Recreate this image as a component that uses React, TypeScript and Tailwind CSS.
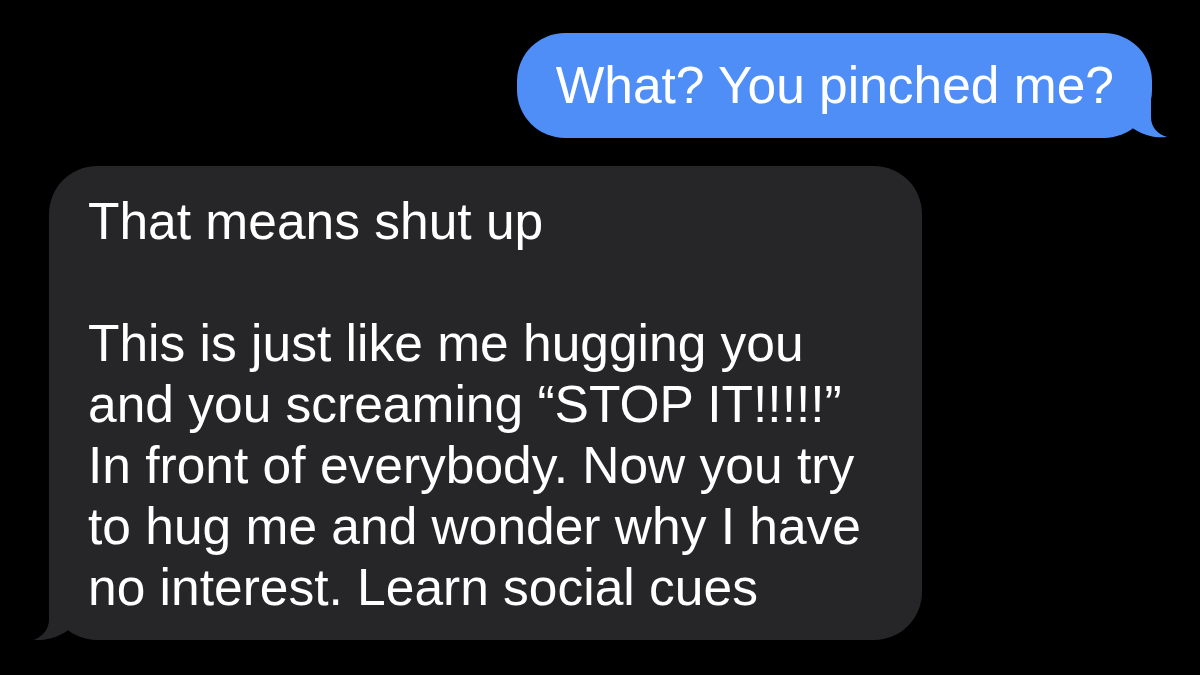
import React from 'react';

const font = { fontFamily: '"Liberation Sans", Arial, Helvetica, sans-serif' };

// small curved tail under the bubble, drawn on top of the rounded corner
function SentTail() {
    return (
        <svg className="absolute right-[-17px] bottom-0" width="42" height="50" viewBox="0 0 42 50">
            <path d="M24 0 L24 29 C24 40 31 46 40 49 C28 50.5 14 47 3 38 L0 0 Z" fill="#4f8ef6" />
        </svg>
    );
}

function ReceivedTail() {
    return (
        <svg className="absolute left-[-16px] bottom-0" width="44" height="50" viewBox="0 0 44 50">
            <path d="M16 0 L16 29 C16 40 9 47 0.5 50 C13 51 27 47 38 38 L40 0 Z" fill="#262628" />
        </svg>
    );
}

export default function App() {
    const lines = [
        'This is just like me hugging you',
        'and you screaming \u201CSTOP IT!!!!!\u201D',
        'In front of everybody. Now you try',
        'to hug me and wonder why I have',
        'no interest. Learn social cues',
    ];

    return (
        <div className="w-[1200px] h-[675px] bg-black overflow-hidden" style={font}>
            <div className="flex flex-col pt-[33px] pl-[49px] pr-[48px] gap-[28px]">
                {/* outgoing */}
                <div className="self-end relative">
                    <div className="bg-[#4f8ef6] rounded-[48px] pl-[39px] pr-[38px] py-[22px] text-white text-[51.5px] leading-[61px] whitespace-nowrap">
                        What? You pinched me?
                    </div>
                    <SentTail />
                </div>

                {/* incoming */}
                <div className="self-start relative">
                    <div className="bg-[#262628] rounded-[48px] w-[873px] pl-[39px] pr-[40px] pt-[25px] pb-[22px] text-white text-[51.5px] leading-[61px] whitespace-nowrap">
                        <div>That means shut up</div>
                        <div className="h-[61px]" />
                        {lines.map((line) => (
                            <div key={line}>{line}</div>
                        ))}
                    </div>
                    <ReceivedTail />
                </div>
            </div>
        </div>
    );
}
